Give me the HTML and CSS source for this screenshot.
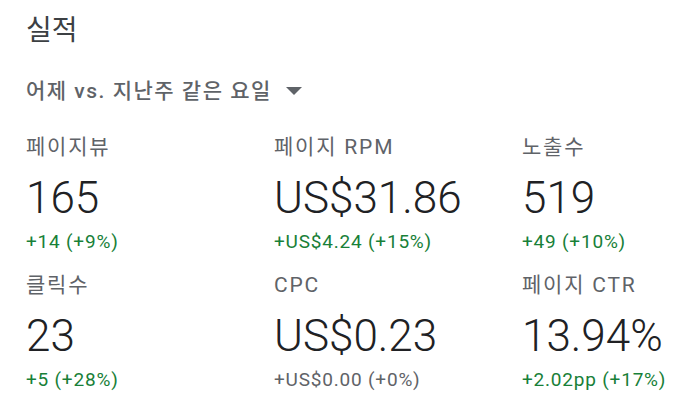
FILE: index.html
```html
<!DOCTYPE html>
<html lang="ko">
<head>
<meta charset="utf-8">
<link rel="stylesheet" href="styles.css">
</head>
<body>
<div class="card">
  <h1 class="title">실적</h1>
  <div class="range">어제 vs. 지난주 같은 요일 <svg class="caret" width="16" height="8" viewBox="0 0 16 8"><path d="M0 0h16L8 8z" fill="#5f6368"/></svg></div>
  <div class="grid">
    <div class="metric">
      <div class="label">페이지뷰</div>
      <div class="value">165</div>
      <div class="delta up">+14 (+9%)</div>
    </div>
    <div class="metric">
      <div class="label">페이지 RPM</div>
      <div class="value">US$31.86</div>
      <div class="delta up">+US$4.24 (+15%)</div>
    </div>
    <div class="metric">
      <div class="label">노출수</div>
      <div class="value">519</div>
      <div class="delta up">+49 (+10%)</div>
    </div>
    <div class="metric">
      <div class="label">클릭수</div>
      <div class="value">23</div>
      <div class="delta up">+5 (+28%)</div>
    </div>
    <div class="metric">
      <div class="label">CPC</div>
      <div class="value">US$0.23</div>
      <div class="delta flat">+US$0.00 (+0%)</div>
    </div>
    <div class="metric">
      <div class="label">페이지 CTR</div>
      <div class="value">13.94%</div>
      <div class="delta up">+2.02pp (+17%)</div>
    </div>
  </div>
</div>
</body>
</html>
```
FILE: styles.css
```css
html, body {
  margin: 0;
  padding: 0;
  background: #ffffff;
}
body {
  font-family: Roboto, "Noto Sans CJK KR", sans-serif;
  color: #202124;
}
.card {
  padding: 13px 0 0 26px;
}
.title {
  margin: 0;
  font-size: 28px;
  font-weight: 400;
  line-height: 36px;
  color: #3c4043;
}
.range {
  margin-top: 28px;
  font-size: 21px;
  font-weight: 500;
  letter-spacing: 1.5px;
  line-height: 28px;
  color: #5f6368;
  display: flex;
  align-items: center;
  gap: 14px;
}
.grid {
  margin-top: 28px;
  display: grid;
  grid-template-columns: 248px 248px 160px;
  row-gap: 17px;
}
.label {
  font-size: 21px;
  letter-spacing: 1.8px;
  line-height: 28px;
  color: #5f6368;
}
.value {
  margin-top: 12px;
  font-size: 44px;
  font-weight: 300;
  line-height: 50px;
  color: #202124;
}
.delta {
  margin-top: 7px;
  font-size: 19px;
  letter-spacing: 0.8px;
  line-height: 24px;
}
.up { color: #188038; }
.flat { color: #5f6368; }
```
